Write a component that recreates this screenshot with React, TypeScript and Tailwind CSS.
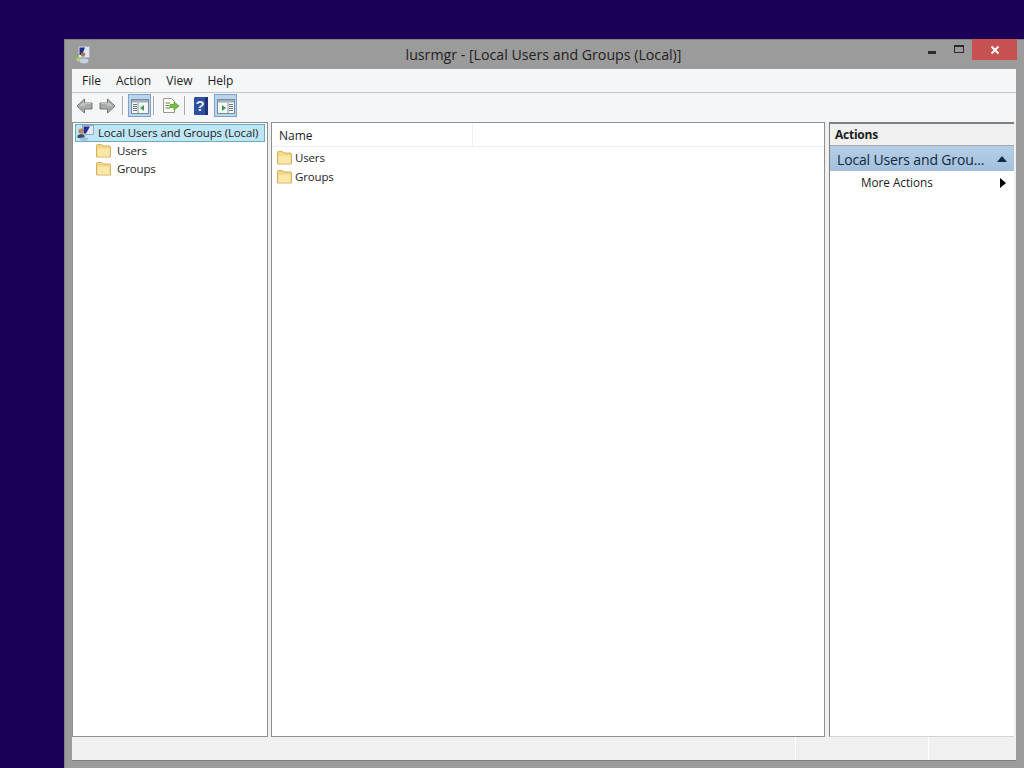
const Folder = () => (
  <svg width="16" height="14" viewBox="0 0 16 14" className="shrink-0">
    <path d="M0.5 13V1.5Q0.5 0.5 1.5 0.5H5.5L7 2H13.5Q14.5 2 14.5 3V13Z" fill="#f3d583" stroke="#d2b163" />
    <path d="M1.5 4.5H13.5V12.5H1.5Z" fill="#fbe7a8" />
  </svg>
);

const Back = ({ flip }: { flip?: boolean }) => (
  <svg width="17" height="16" viewBox="0 0 17 16" className={flip ? "-scale-x-100 shrink-0" : "shrink-0"}>
    <path d="M8.5 1L1 8L8.5 15V11H16V5H8.5Z" fill="#a9aaa8" stroke="#777" />
    <path d="M8 3.5L3 8H9V6H15V5H8Z" fill="#c4c4c2" />
  </svg>
);

const PaneIcon = ({ right }: { right?: boolean }) => (
  <svg width="18" height="16" viewBox="0 0 18 16">
    <rect x="0.5" y="1.5" width="17" height="14" fill="#f4f7f7" stroke="#7d8a90" />
    <rect x="1" y="2" width="16" height="2.5" fill="#9eb0ba" />
    {right ? (
      <>
        <path d="M5 7L9 10L5 13Z" fill="#3e9a4a" />
        <path d="M12 6.5H16M12 8.5H16M12 10.5H16M12 12.5H16" stroke="#6b7a80" />
        <path d="M11 5V15" stroke="#8a9aa0" />
      </>
    ) : (
      <>
        <path d="M13 7L9 10L13 13Z" fill="#3e9a4a" />
        <path d="M2 6.5H6M2 8.5H6M2 10.5H6M2 12.5H6" stroke="#6b7a80" />
        <path d="M7 5V15" stroke="#8a9aa0" />
      </>
    )}
  </svg>
);

const ExportIcon = () => (
  <svg width="18" height="17" viewBox="0 0 18 17" className="shrink-0">
    <path d="M1.5 1.5H9.5L12.5 4.5V15.5H1.5Z" fill="#fbfbf2" stroke="#9a9a8c" />
    <path d="M3.5 6H8M3.5 8.5H7M3.5 11H8" stroke="#6c7c50" />
    <path d="M8 7.5H12V5L17 9L12 13V10.5H8Z" fill="#76c043" stroke="#4d9a2a" strokeWidth="0.7" />
  </svg>
);

const HelpIcon = () => (
  <svg width="14" height="18" viewBox="0 0 14 18" className="shrink-0">
    <rect x="0" y="0" width="14" height="18" rx="1" fill="#2f4f9f" />
    <rect x="11" y="0" width="3" height="18" fill="#1d3478" />
    <text x="6" y="14" fontSize="15" fontWeight="700" textAnchor="middle" fill="#dfe6f5" fontFamily="Liberation Sans, sans-serif">?</text>
  </svg>
);

const ComputerIcon = () => (
  <svg width="17" height="16" viewBox="0 0 17 16" className="shrink-0">
    <rect x="5.5" y="0.5" width="11" height="9" fill="#e3ecf6" stroke="#8a9ab0" strokeWidth="0.8" />
    <path d="M6.5 1.5H13L9 8.5H6.5Z" fill="#1f2f9c" />
    <circle cx="4" cy="6" r="2.6" fill="#b98a55" />
    <path d="M0.5 13V10.5Q4 7.5 7.5 10.5V13Z" fill="#3f4d63" />
    <ellipse cx="7" cy="14" rx="4.5" ry="1.8" fill="#9fc0e0" />
  </svg>
);

const AppIcon = () => (
  <svg width="16" height="18" viewBox="0 0 16 18" className="shrink-0">
    <rect x="4.5" y="0.5" width="11" height="11" fill="#dfe6f2" stroke="#aab4c2" strokeWidth="0.7" />
    <path d="M5.5 1.5H11L8 9H5.5Z" fill="#22307f" />
    <circle cx="9" cy="8.5" r="2.2" fill="#a67a48" />
    <circle cx="2.6" cy="10" r="2.2" fill="#8da66a" />
    <circle cx="4.6" cy="13.5" r="2.4" fill="#b7bf8d" />
    <ellipse cx="10" cy="15" rx="4.5" ry="2.4" fill="#c3d0dd" />
  </svg>
);

const Sep = ({ className }: { className: string }) => (
  <div className={`w-px h-[19px] bg-[#a5a9ac] border-r border-white box-content shrink-0 ${className}`} />
);

const Active = ({ children }: { children: React.ReactNode }) => (
  <div className="w-[23px] h-[23px] shrink-0 flex items-center justify-center bg-[#b9d4ee] border border-[#7da2ce]">{children}</div>
);

const treeText = "text-[11.5px] tracking-[-0.15px] whitespace-nowrap";

export default function App() {
  return (
    <div
      className="w-[1024px] h-[768px] overflow-hidden bg-[#1b0058] pl-[64px] pt-[39px] text-[12px] text-[#1c1c1c]"
      style={{ fontFamily: '"Open Sans", "Noto Sans", sans-serif' }}
    >
      <div className="w-[960px] h-[729px] flex flex-col bg-[#9b9b9b] border-l border-t border-[#7f7f7f]">
        {/* title bar */}
        <div className="relative h-[29px] shrink-0 flex items-center justify-center pr-[2px] text-[14.2px] text-[#222]">
          <div className="absolute left-[9px] top-[6px]"><AppIcon /></div>
          <span>lusrmgr - [Local Users and Groups (Local)]</span>
          <div className="absolute -top-px left-[854px] flex items-start">
            <div className="w-[30px] h-[21px] flex justify-center">
              <div className="w-[8px] h-[3px] bg-[#2b2b2b] mt-[12px] -ml-[4px]" />
            </div>
            <div className="w-[30px] h-[21px] flex justify-center">
              <div className="w-[10px] h-[8px] border border-[#2b2b2b] border-t-2 mt-[6px] -ml-[10px]" />
            </div>
            <div className="w-[45px] h-[21px] -ml-[7px] bg-[#c75050] flex items-center justify-center">
              <svg width="10" height="10" viewBox="0 0 10 10">
                <path d="M1.5 1.5L8.5 8.5M8.5 1.5L1.5 8.5" stroke="#fff" strokeWidth="2" />
              </svg>
            </div>
          </div>
        </div>

        {/* client area */}
        <div className="flex-1 flex min-h-0">
          <div className="w-[7px] shrink-0" />
          <div className="w-[944px] flex flex-col bg-[#f0f0f0] h-[692px]">
            {/* menu */}
            <div className="h-[24px] shrink-0 flex items-center bg-[#f5f6f7] border-b border-[#c5c8cb] pl-[10px] pt-px gap-[15px] text-[12px]">
              <span>File</span>
              <span>Action</span>
              <span>View</span>
              <span>Help</span>
            </div>
            {/* toolbar */}
            <div className="h-[29px] shrink-0 flex items-start pt-px pl-[4px] bg-[#f5f6f7]">
              <div className="h-[23px] flex items-center">
                <Back />
                <div className="w-[6px] shrink-0" />
                <Back flip />
                <Sep className="ml-[6px] mr-[4px]" />
              </div>
              <Active><PaneIcon /></Active>
              <div className="h-[23px] flex items-center">
                <Sep className="ml-[2px] mr-[7px]" />
                <ExportIcon />
                <Sep className="ml-[4px] mr-[8px]" />
                <HelpIcon />
              </div>
              <div className="ml-[6px]"><Active><PaneIcon right /></Active></div>
            </div>
            {/* panes */}
            <div className="h-[615px] shrink-0 flex bg-[#f0f0f0]">
              {/* tree */}
              <div className="w-[196px] shrink-0 bg-white border border-[#8f8f8f] pt-[1px] pl-[2px]">
                <div className="flex items-center h-[18px] w-[190px] bg-[#bfe6f5] border border-[#6aa9c8] pl-[1px] gap-[4px]">
                  <ComputerIcon />
                  <span className={treeText}>Local Users and Groups (Local)</span>
                </div>
                <div className="flex items-center h-[18px] pl-[21px] gap-[5px]"><Folder /><span className={treeText}>Users</span></div>
                <div className="flex items-center h-[18px] pl-[21px] gap-[5px]"><Folder /><span className={treeText}>Groups</span></div>
              </div>
              <div className="w-[3px] shrink-0" />
              {/* list */}
              <div className="w-[554px] shrink-0 bg-white border border-[#8f8f8f]">
                <div className="h-[24px] flex border-b border-[#eeeeee]">
                  <div className="w-[201px] pl-[7px] pt-[2px] flex items-center border-r border-[#efefef]">Name</div>
                </div>
                <div className="flex items-center h-[19px] pl-[5px] gap-[2px] mt-[1px]"><Folder /><span className={treeText}>Users</span></div>
                <div className="flex items-center h-[19px] pl-[5px] gap-[2px]"><Folder /><span className={treeText}>Groups</span></div>
              </div>
              <div className="w-[4px] shrink-0" />
              {/* actions */}
              <div className="w-[185px] shrink-0 bg-white border-l border-[#7f7f7f] border-t-2 border-t-[#7f7f7f] border-b border-b-[#d5d5d5]">
                <div className="h-[22px] flex items-center pl-[5px] font-bold bg-[#f0f0f0] border-b border-[#a8a8a8] tracking-[-0.25px]">Actions</div>
                <div className="h-[25px] flex items-center pl-[7px] pr-[7px] pt-px justify-between bg-gradient-to-b from-[#b5cfe6] to-[#a3c0dc] text-[14px] tracking-[-0.15px] text-[#14283c]">
                  <span className="whitespace-nowrap">Local Users and Grou...</span>
                  <svg width="10" height="6" viewBox="0 0 10 6" className="shrink-0"><path d="M0 6L5 0L10 6Z" fill="#0e2a47" /></svg>
                </div>
                <div className="h-[24px] flex items-center pl-[31px] pr-[8px] justify-between">
                  <span className="text-[11.7px] whitespace-nowrap">More Actions</span>
                  <svg width="6" height="10" viewBox="0 0 6 10" className="shrink-0"><path d="M0 0L6 5L0 10Z" fill="#000" /></svg>
                </div>
              </div>
              <div className="w-[2px] shrink-0" />
            </div>
            {/* status bar */}
            <div className="h-[24px] flex border-b border-[#7f7f7f] bg-[#f0f0f0]">
              <div className="w-[724px] border-r border-white" />
              <div className="w-[133px] border-r border-white" />
              <div className="flex-1" />
            </div>
          </div>
        </div>
      </div>
    </div>
  );
}
